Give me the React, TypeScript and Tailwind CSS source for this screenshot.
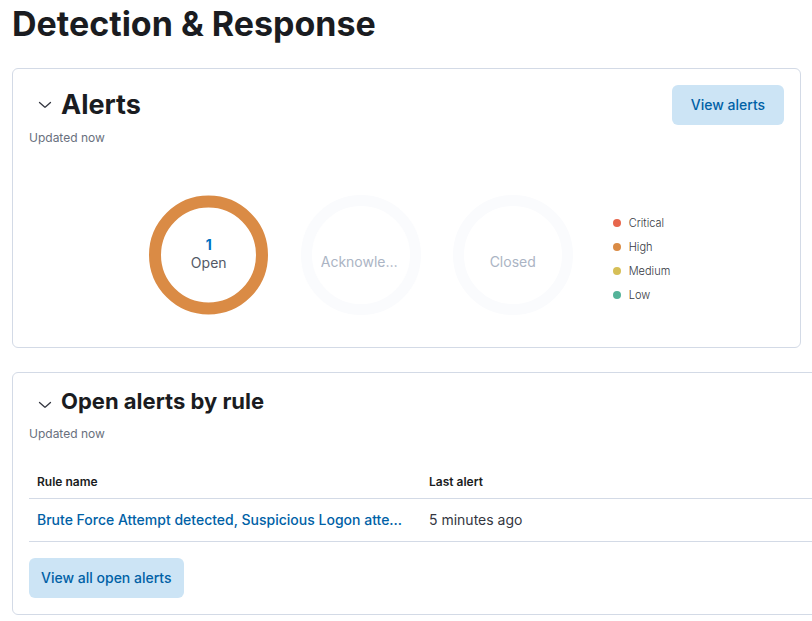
import React from "react";

function Chevron() {
  return (
    <svg width="16" height="16" viewBox="0 0 16 16" fill="none" stroke="#343741" strokeWidth="1.3" strokeLinecap="round" strokeLinejoin="round" aria-hidden="true">
      <path d="M2.5 5.5 7.600 10.100q.4.3.8 0L13.500 5.500" />
    </svg>
  );
}

function Donut({ color, label, count }: { color: string; label: string; count?: number }) {
  return (
    <div className="relative size-[120px]">
      <svg width="120" height="120" viewBox="0 0 120 120" fill="none" aria-hidden="true">
        {count !== undefined ? (
          <circle cx="59.500" cy="60" r="53.500" stroke={color} strokeWidth="12" />
        ) : (
          <circle cx="60" cy="60" r="54.500" stroke={color} strokeWidth="11" />
        )}
      </svg>
      <div className="absolute inset-0 flex flex-col items-center justify-center pb-0.5 text-sm leading-[18px]">
        {count !== undefined ? (
          <>
            <button type="button" className="font-bold text-[#0071c2]">{count}</button>
            <span className="text-[#535966]">{label}</span>
          </>
        ) : (
          <span className="mt-4 w-20 truncate text-center text-[#abb4c4]">{label}</span>
        )}
      </div>
    </div>
  );
}

const severities = [
  { name: "Critical", dot: "bg-[#e7664c]" },
  { name: "High", dot: "bg-[#da8b45]" },
  { name: "Medium", dot: "bg-[#d6bf57]" },
  { name: "Low", dot: "bg-[#54b399]" },
];

export default function App() {
  return (
    <main className="overflow-hidden bg-white pl-3 font-['Inter',sans-serif] text-[#343741]">
      <h1 className="pt-1 text-[34px] leading-10 font-bold text-[#1a1c21]">Detection &amp; Response</h1>

      <section className="mt-6 mr-[11px] rounded-md border border-[#d3dae6] p-4 pb-8">
        <div className="flex items-start justify-between">
          <div>
            <div className="flex items-center gap-2 pl-2">
              <button type="button" aria-label="Toggle alerts"><Chevron /></button>
              <h2 className="text-[27px] leading-10 font-bold text-[#1a1c21]">Alerts</h2>
            </div>
            <p className="mt-1 text-xs leading-[18px] text-[#69707d]">Updated now</p>
          </div>
          <button type="button" className="h-10 w-28 rounded-md bg-[#cce4f5] text-sm font-medium text-[#0061a6]">View alerts</button>
        </div>
        <div className="mt-12 flex items-center justify-center gap-8 pl-1.5">
          <Donut color="#da8b45" label="Open" count={1} />
          <Donut color="#fafbfd" label="Acknowledged" />
          <Donut color="#fafbfd" label="Closed" />
          <ul className="ml-2 pt-2 text-[11px] leading-6 font-light">
            {severities.map((s) => (
              <li key={s.name} className="flex items-center gap-2">
                <span className={`size-2 rounded-full ${s.dot}`} />
                {s.name}
              </li>
            ))}
          </ul>
        </div>
      </section>

      <section className="mt-6 -mr-10 rounded-md border border-[#d3dae6] p-4">
        <div className="flex items-start gap-2 pl-2">
          <button type="button" aria-label="Toggle open alerts by rule" className="h-8"><Chevron /></button>
          <h2 className="text-[22px] leading-6 font-bold text-[#1a1c21]">Open alerts by rule</h2>
        </div>
        <p className="mt-1 text-xs leading-[18px] text-[#69707d]">Updated now</p>
        <table className="mt-6 w-full table-fixed text-left">
          <thead>
            <tr className="h-[31px] border-b border-[#d3dae6] text-xs text-[#1a1c21]">
              <th className="w-[392px] px-2 font-semibold">Rule name</th>
              <th className="px-2 font-semibold">Last alert</th>
            </tr>
          </thead>
          <tbody>
            <tr className="h-[43px] border-b border-[#d3dae6] text-sm">
              <td className="px-2"><a href="#rule" className="block truncate font-medium text-[#0061a6]">Brute Force Attempt detected, Suspicious Logon attempts</a></td>
              <td className="px-2">5 minutes ago</td>
            </tr>
          </tbody>
        </table>
        <button type="button" className="mt-4 h-10 rounded-md bg-[#cce4f5] px-3 text-sm font-medium text-[#0061a6]">View all open alerts</button>
      </section>
    </main>
  );
}
